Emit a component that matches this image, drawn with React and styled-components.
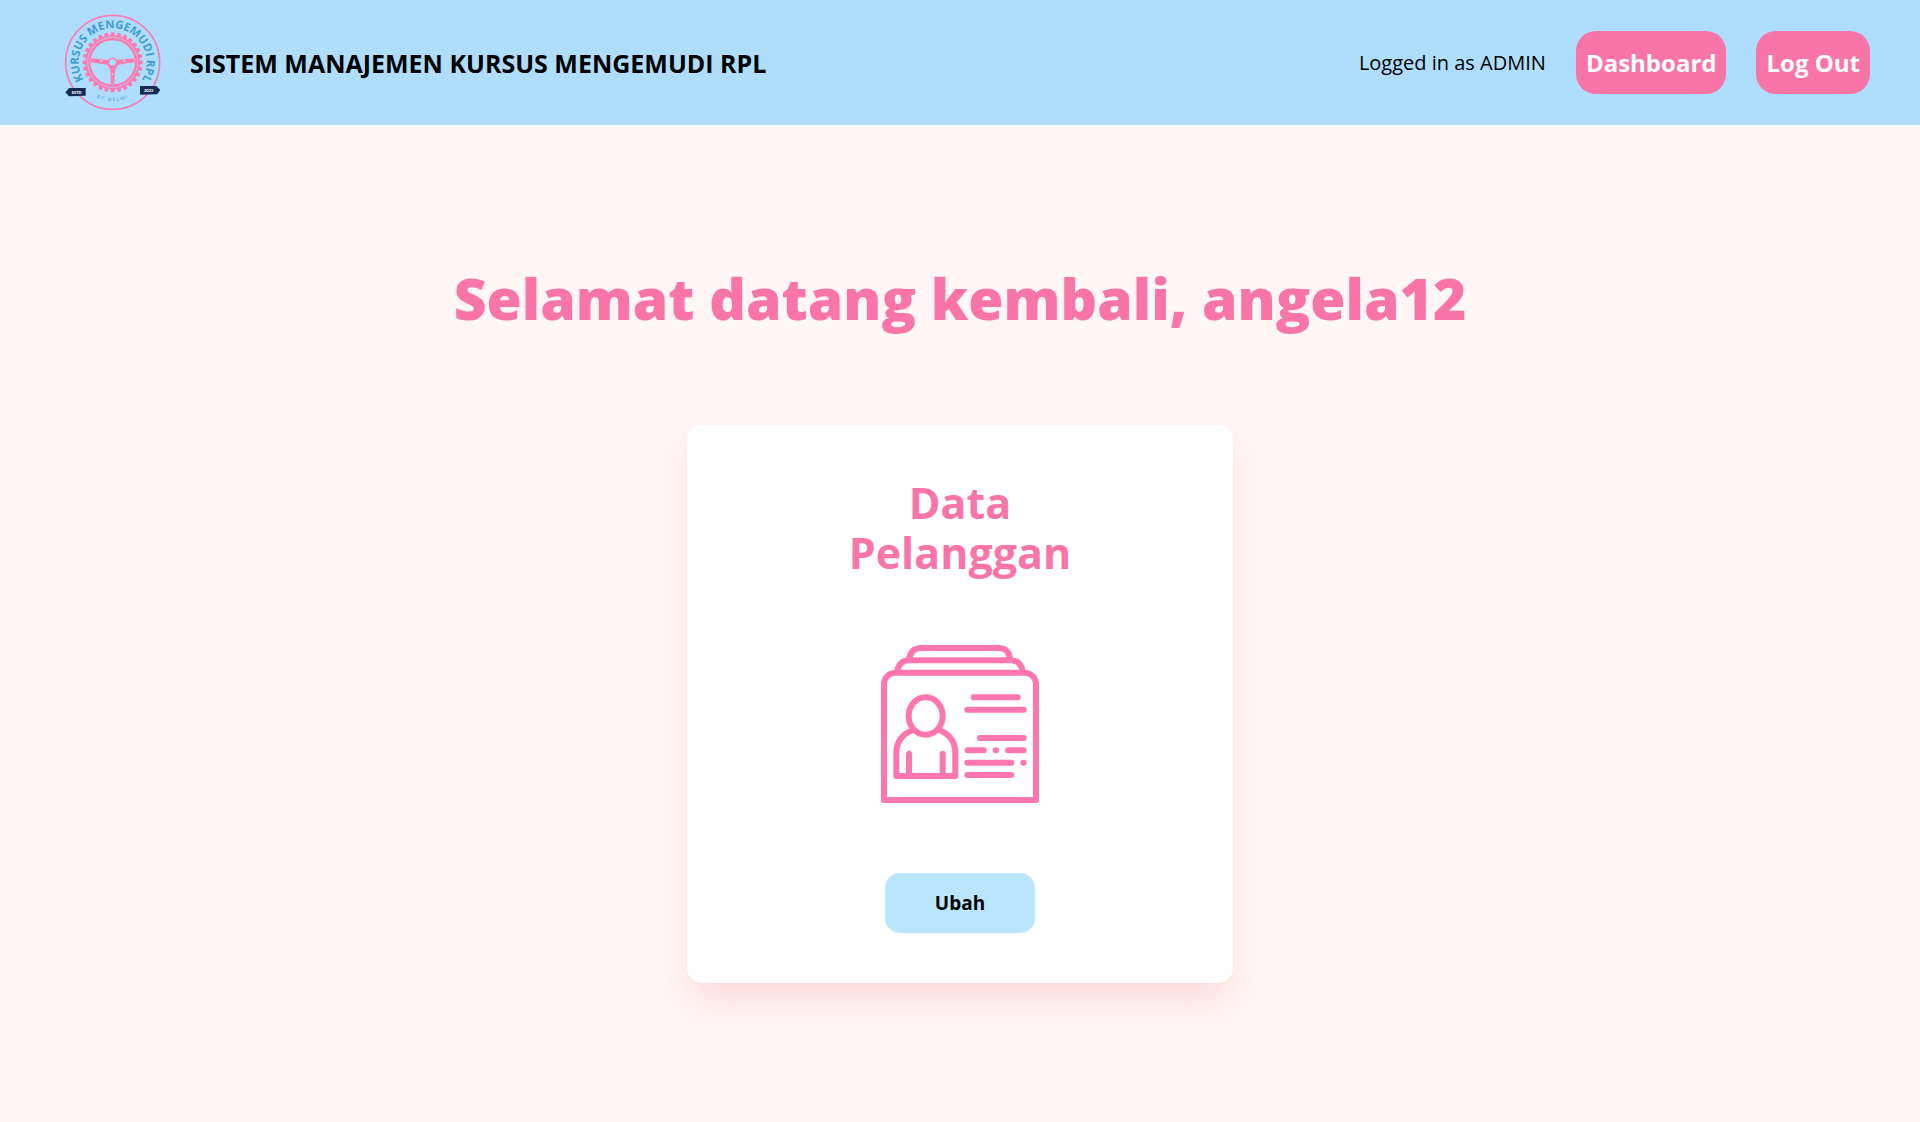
import React from "react";
import styled, { createGlobalStyle } from "styled-components";

const pink = "#f975a8";
const logoPink = "#fb7bb2";
const iconPink = "#fd76b0";

const GlobalStyle = createGlobalStyle`
  *, *::before, *::after { box-sizing: border-box; }
  body {
    margin: 0;
    min-height: 100vh;
    background: #fff6f5;
    color: #000;
    font-family: "Segoe UI", "Open Sans", "Noto Sans", sans-serif;
  }
`;

const Header = styled.header`
  display: flex;
  align-items: center;
  justify-content: space-between;
  height: 125px;
  padding: 0 50px;
  background: #aedefc;
`;

const Brand = styled.div`
  display: flex;
  align-items: center;
  gap: 15px;
`;

const SiteName = styled.p`
  margin: 0;
  font-size: 25px;
  line-height: 32px;
  font-weight: 700;
`;

const Nav = styled.nav`
  display: flex;
  align-items: center;
  gap: 30px;
`;

const Status = styled.p`
  margin: 0;
  font-size: 20px;
  line-height: 32px;
`;

const NavLink = styled.a`
  padding: 16px 10px;
  border-radius: 20px;
  background: ${pink};
  color: #fff;
  font-size: 24px;
  line-height: 31px;
  font-weight: 700;
  text-decoration: none;
`;

const Main = styled.main`
  display: flex;
  flex-direction: column;
  align-items: center;
  padding: 133px 24px;
`;

const Welcome = styled.h1`
  margin: 0 0 87px;
  color: ${pink};
  font-size: 57px;
  line-height: 80px;
  font-weight: 800;
  text-align: center;
`;

const Card = styled.section`
  display: flex;
  flex-direction: column;
  align-items: center;
  width: 100%;
  max-width: 546px;
  padding: 50px;
  border-radius: 15px;
  background: #fff;
  box-shadow: 0 20px 35px -5px rgba(255, 150, 155, 0.32);
`;

const CardTitle = styled.h2`
  max-width: 250px;
  margin: 3px 0 66px;
  color: ${pink};
  font-size: 43px;
  line-height: 50px;
  font-weight: 700;
  text-align: center;
`;

const EditButton = styled.button`
  width: 150px;
  height: 60px;
  margin-top: 69px;
  border: 0;
  border-radius: 15px;
  background: #b9e6fe;
  color: #000;
  font-family: inherit;
  font-size: 19px;
  font-weight: 700;
  cursor: pointer;
`;

const teeth = Array.from({ length: 28 }, (_, i) => (i * 360) / 28);

function Logo() {
  return (
    <svg width="125" height="115" viewBox="-15 0 375 345" role="img" aria-label="Kursus Mengemudi RPL">
      <defs>
        <path id="ring" d="M101 244 A102 102 0 1 1 245 244" />
        <path id="foot" d="M90 254 A117 117 0 0 0 256 254" />
      </defs>
      <circle cx="173" cy="172" r="141" fill="none" stroke={logoPink} strokeWidth="5" />
      <g fill={logoPink}>
        {teeth.map((a) => (
          <path key={a} d="M166 94 L168 82 H178 L180 94 Z" transform={`rotate(${a} 173 172)`} />
        ))}
      </g>
      <circle cx="173" cy="172" r="74" fill="none" stroke={logoPink} strokeWidth="15" />
      <circle cx="173" cy="172" r="75" fill="none" stroke="#aedefc" strokeWidth="2" />
      <path
        d="M108 160 L160 165 A15 15 0 0 1 186 165 L238 160 V172 L190 179 Q182 188 180 198 L178 238 H168 L166 198 Q164 188 156 179 L108 172 Z"
        fill={logoPink}
      />
      <circle cx="173" cy="172" r="10" fill="#aedefc" />
      <g fill="#aedefc">
        <circle cx="138" cy="168" r="3" />
        <circle cx="208" cy="168" r="3" />
        <circle cx="173" cy="208" r="3" />
      </g>
      <g fontFamily="Open Sans, sans-serif">
        <text fontSize="34" fontWeight="700" fill="#3f9bd5">
          <textPath href="#ring" startOffset="50%" textAnchor="middle">KURSUS MENGEMUDI RPL</textPath>
        </text>
        <text fontSize="15" fontWeight="600" letterSpacing="4" fill="#5aa9df">
          <textPath href="#foot" startOffset="50%" textAnchor="middle">BY HELMI</textPath>
        </text>
      </g>
      <path d="M92 249 H42 L31 262 L42 274 L92 272 Z" fill="#152b55" />
      <path d="M255 243 H304 L316 255 L306 268 L255 269 Z" fill="#152b55" />
      <g fill="#fff" fontFamily="Lato, sans-serif" fontSize="12" fontWeight="900" textAnchor="middle">
        <text x="65" y="266">ESTD</text>
        <text x="281" y="260">2023</text>
      </g>
    </svg>
  );
}

function CustomerIcon() {
  return (
    <svg width="160" height="160" viewBox="30 27 480 480" fill="none" stroke={iconPink} strokeWidth="18" strokeLinecap="round" strokeLinejoin="round" aria-hidden="true">
      <path d="M42 495 V147 A35 35 0 0 1 77 113 H463 A35 35 0 0 1 498 147 V495 Z" />
      <path d="M81 110 Q88 76 118 76 H422 Q452 76 459 110" />
      <path d="M117 74 Q122 39 154 39 H386 Q416 39 421 74" />
      <ellipse cx="167" cy="243" rx="51" ry="56" />
      <path d="M127 286 Q79 305 79 355 V423 H256 V355 Q256 305 209 286" />
      <path d="M117 356 V420 M218 356 V420" />
      <path d="M311 187 H443 M292 224 H461 M330 309 H461 M293 346 H341 M377 346 H378 M414 346 H461 M292 383 H424 M460 383 H461 M292 420 H424" />
    </svg>
  );
}

export default function App() {
  return (
    <>
      <GlobalStyle />
      <Header>
        <Brand>
          <Logo />
          <SiteName>SISTEM MANAJEMEN KURSUS MENGEMUDI RPL</SiteName>
        </Brand>
        <Nav>
          <Status>Logged in as ADMIN</Status>
          <NavLink href="#dashboard">Dashboard</NavLink>
          <NavLink href="#logout">Log Out</NavLink>
        </Nav>
      </Header>
      <Main>
        <Welcome>Selamat datang kembali, angela12</Welcome>
        <Card>
          <CardTitle>Data Pelanggan</CardTitle>
          <CustomerIcon />
          <EditButton type="button">Ubah</EditButton>
        </Card>
      </Main>
    </>
  );
}
